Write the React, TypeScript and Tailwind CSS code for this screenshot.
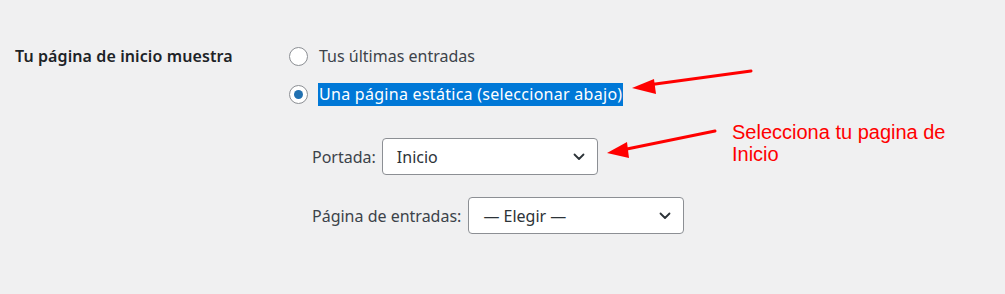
import React from "react";

function Chevron() {
  return (
    <svg width="16" height="16" viewBox="0 0 16 16" className="shrink-0">
      <path d="M3.5 5.5 L8 10 L12.5 5.5" fill="none" stroke="#2c3338" strokeWidth="1.8" strokeLinecap="round" strokeLinejoin="round" />
    </svg>
  );
}

function Select({ value, width }: { value: string; width: string }) {
  return (
    <div className={`${width} h-[37px] bg-white border border-[#8c8f94] rounded-[4px] flex items-center justify-between pl-[14px] pr-[10px] text-[#2c3338] text-[16px]`}>
      <span>{value}</span>
      <Chevron />
    </div>
  );
}

export default function App() {
  return (
    <div
      className="relative w-[1005px] h-[294px] bg-[#f0f0f1] overflow-hidden text-[#3c434a]"
      style={{ fontFamily: '"Noto Sans", "Open Sans", sans-serif' }}
    >
      <div className="flex pt-[43px] pl-[15px]">
        <div className="w-[274px] text-[16px] font-semibold text-[#1d2327] leading-[26px] tracking-[0.1px]">
          Tu página de inicio muestra
        </div>
        <div className="flex flex-col">
          <label className="flex items-center h-[26px] gap-[11px] text-[16px]">
            <span className="w-[19px] h-[19px] rounded-full border border-[#8c8f94] bg-white" />
            <span>Tus últimas entradas</span>
          </label>
          <label className="flex items-center h-[26px] gap-[10px] text-[16px] mt-[12px]">
            <span className="w-[19px] h-[19px] rounded-full border border-[#8c8f94] bg-white flex items-center justify-center">
              <span className="w-[9px] h-[9px] rounded-full bg-[#2271b1]" />
            </span>
            <span className="bg-[#0078d7] text-white px-[1px] leading-[23px] tracking-[0.28px]">Una página estática (seleccionar abajo)</span>
          </label>
          <div className="flex flex-col pl-[23px] mt-[31px] gap-[22px] text-[16px]">
            <div className="flex items-center gap-[6px]">
              <span>Portada:</span>
              <Select value="Inicio" width="w-[216px]" />
            </div>
            <div className="flex items-center gap-[7px]">
              <span>Página de entradas:</span>
              <Select value="— Elegir —" width="w-[216px]" />
            </div>
          </div>
        </div>
      </div>

      <svg className="absolute left-0 top-0 pointer-events-none" width="1005" height="294">
        <line x1="751" y1="71" x2="648" y2="85" stroke="#ff0000" strokeWidth="3" strokeLinecap="round" />
        <polygon points="632,88 654,79 656,94" fill="#ff0000" />
        <line x1="715" y1="131" x2="622" y2="150" stroke="#ff0000" strokeWidth="3" strokeLinecap="round" />
        <polygon points="607,153 627,142 629,158" fill="#ff0000" />
      </svg>
      <div
        className="absolute left-[732px] top-[121px] text-[20px] leading-[22px] text-[#ff0000]"
        style={{ fontFamily: '"Liberation Sans", Arial, sans-serif' }}
      >
        Selecciona tu pagina de
        <br />
        Inicio
      </div>
    </div>
  );
}
